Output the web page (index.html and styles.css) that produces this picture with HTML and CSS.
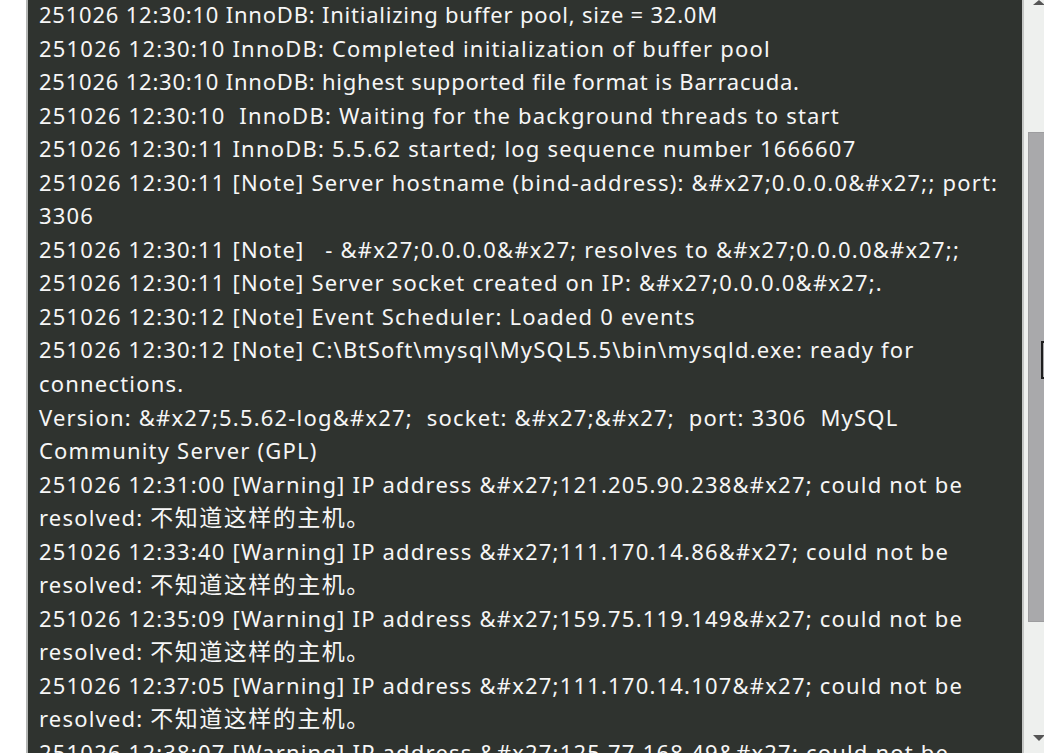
FILE: index.html
```html
<!DOCTYPE html>
<html lang="zh-CN">
<head>
    <meta charset="UTF-8">
    <meta name="viewport" content="width=device-width, initial-scale=1.0">
    <title>MySQL 日志</title>
    <link rel="stylesheet" href="styles.css">
</head>
<body>
    <div class="gutter"></div>
    <div class="log">
        <div class="log-lines">
            <div class="line tight">251026 12:30:10 InnoDB: Initializing buffer pool, size = 32.0M</div>
            <div class="line">251026 12:30:10 InnoDB: Completed initialization of buffer pool</div>
            <div class="line tight">251026 12:30:10 InnoDB: highest supported file format is Barracuda.</div>
            <div class="line">251026 12:30:10  InnoDB: Waiting for the background threads to start</div>
            <div class="line">251026 12:30:11 InnoDB: 5.5.62 started; log sequence number 1666607</div>
            <div class="line">251026 12:30:11 [Note] Server hostname (bind-address): &amp;#x27;0.0.0.0&amp;#x27;; port:<br>3306</div>
            <div class="line">251026 12:30:11 [Note]   - &amp;#x27;0.0.0.0&amp;#x27; resolves to &amp;#x27;0.0.0.0&amp;#x27;;</div>
            <div class="line">251026 12:30:11 [Note] Server socket created on IP: &amp;#x27;0.0.0.0&amp;#x27;.</div>
            <div class="line">251026 12:30:12 [Note] Event Scheduler: Loaded 0 events</div>
            <div class="line">251026 12:30:12 [Note] C:\BtSoft\mysql\MySQL5.5\bin\mysqld.exe: ready for<br>connections.</div>
            <div class="line">Version: &amp;#x27;5.5.62-log&amp;#x27;  socket: &amp;#x27;&amp;#x27;  port: 3306  MySQL<br>Community Server (GPL)</div>
            <div class="line">251026 12:31:00 [Warning] IP address &amp;#x27;121.205.90.238&amp;#x27; could not be<br>resolved: <span class="cjk">不知道这样的主机。</span></div>
            <div class="line">251026 12:33:40 [Warning] IP address &amp;#x27;111.170.14.86&amp;#x27; could not be<br>resolved: <span class="cjk">不知道这样的主机。</span></div>
            <div class="line">251026 12:35:09 [Warning] IP address &amp;#x27;159.75.119.149&amp;#x27; could not be<br>resolved: <span class="cjk">不知道这样的主机。</span></div>
            <div class="line">251026 12:37:05 [Warning] IP address &amp;#x27;111.170.14.107&amp;#x27; could not be<br>resolved: <span class="cjk">不知道这样的主机。</span></div>
            <div class="line">251026 12:38:07 [Warning] IP address &amp;#x27;125.77.168.49&amp;#x27; could not be<br>resolved: <span class="cjk">不知道这样的主机。</span></div>
        </div>
    </div>
    <div class="scrollbar">
        <div class="arrow arrow-up"></div>
        <div class="track">
            <div class="thumb">
                <div class="cursor"></div>
            </div>
        </div>
        <div class="arrow arrow-down"></div>
    </div>
</body>
</html>
```

FILE: styles.css
```css
body {
    display: flex;
    height: 753px;
    margin: 0;
    overflow: hidden;
    background: #ffffff;
    font-family: "Noto Sans", "Noto Sans CJK SC", sans-serif;
}

.gutter {
    width: 26px;
    flex-shrink: 0;
    background: #ffffff;
}

.log {
    flex: 1;
    overflow: hidden;
    background: #2f332f;
    border-left: 2px solid #b4b6b4;
    border-right: 2px solid #c4c6c4;
}

.log-lines {
    margin-top: -2px;
    padding-left: 11px;
    color: #f6f6f6;
    font-size: 22px;
    letter-spacing: 1.2px;
    line-height: 33.55px;
}

.line {
    white-space: pre;
}

.tight {
    letter-spacing: 0.78px;
}

.cjk {
    font-family: "Noto Sans CJK SC", sans-serif;
    font-size: 23px;
    letter-spacing: 1.5px;
    line-height: 1;
}

/* Scrollbar on the right */
.scrollbar {
    width: 20px;
    flex-shrink: 0;
    display: flex;
    flex-direction: column;
    background: #eef0ee;
}

.arrow {
    height: 0;
    width: 0;
    margin-left: 9px;
    border-left: 6px solid transparent;
    border-right: 6px solid transparent;
}

.arrow-up {
    border-bottom: 5px solid #555555;
}

.arrow-down {
    margin-bottom: 12px;
    border-top: 6px solid #555555;
}

.track {
    flex: 1;
    padding-top: 127px;
    padding-left: 4px;
}

.thumb {
    position: relative;
    height: 488px;
    background: #a9a9ab;
    border: 1px solid #9d9d9f;
    border-right: none;
}

/* mouse I-beam resting on the thumb */
.cursor {
    position: absolute;
    top: 208px;
    left: 12px;
    width: 3px;
    height: 34px;
    border-left: 2px solid #1e1e1e;
    border-top: 2px solid #1e1e1e;
    border-bottom: 2px solid #1e1e1e;
}
```
